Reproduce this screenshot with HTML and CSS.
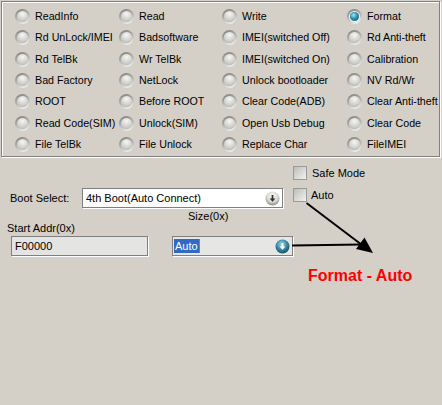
FILE: index.html
```html
<!DOCTYPE html>
<html lang="en">
  <head>
    <meta charset="utf-8" />
    <title>Flash Tool</title>
    <link rel="stylesheet" href="styles.css">
  </head>
  <body>
    <!-- operation choices -->
    <div class="group">
      <div class="radios">
        <label class="opt"><span class="radio"></span>ReadInfo</label>
        <label class="opt"><span class="radio"></span>Read</label>
        <label class="opt"><span class="radio"></span>Write</label>
        <label class="opt"><span class="radio on"></span>Format</label>

        <label class="opt"><span class="radio"></span>Rd UnLock/IMEI</label>
        <label class="opt"><span class="radio"></span>Badsoftware</label>
        <label class="opt"><span class="radio"></span>IMEI(switched Off)</label>
        <label class="opt"><span class="radio"></span>Rd Anti-theft</label>

        <label class="opt"><span class="radio"></span>Rd TelBk</label>
        <label class="opt"><span class="radio"></span>Wr TelBk</label>
        <label class="opt"><span class="radio"></span>IMEI(switched On)</label>
        <label class="opt"><span class="radio"></span>Calibration</label>

        <label class="opt"><span class="radio"></span>Bad Factory</label>
        <label class="opt"><span class="radio"></span>NetLock</label>
        <label class="opt"><span class="radio"></span>Unlock bootloader</label>
        <label class="opt"><span class="radio"></span>NV Rd/Wr</label>

        <label class="opt"><span class="radio"></span>ROOT</label>
        <label class="opt"><span class="radio"></span>Before ROOT</label>
        <label class="opt"><span class="radio"></span>Clear Code(ADB)</label>
        <label class="opt"><span class="radio"></span>Clear Anti-theft</label>

        <label class="opt"><span class="radio"></span>Read Code(SIM)</label>
        <label class="opt"><span class="radio"></span>Unlock(SIM)</label>
        <label class="opt"><span class="radio"></span>Open Usb Debug</label>
        <label class="opt"><span class="radio"></span>Clear Code</label>

        <label class="opt"><span class="radio"></span>File TelBk</label>
        <label class="opt"><span class="radio"></span>File Unlock</label>
        <label class="opt"><span class="radio"></span>Replace Char</label>
        <label class="opt"><span class="radio"></span>FileIMEI</label>
      </div>
    </div>

    <!-- boot options -->
    <div class="row-safe">
      <span class="check"></span><span>Safe Mode</span>
    </div>

    <div class="row-boot">
      <span class="boot-label">Boot Select:</span>
      <div class="combo">
        <span>4th Boot(Auto Connect)</span>
        <svg class="drop" viewBox="0 0 15 15">
          <defs>
            <radialGradient id="grey-ball" cx="50%" cy="35%" r="65%">
              <stop offset="0" stop-color="#ffffff" />
              <stop offset="0.6" stop-color="#d8d8d4" />
              <stop offset="1" stop-color="#888884" />
            </radialGradient>
          </defs>
          <circle cx="7.5" cy="7.5" r="7" fill="url(#grey-ball)" />
          <path d="M6.6 4h1.8v3.4h2L7.5 10.8 4.6 7.4h2z" fill="#333" />
        </svg>
      </div>
      <div class="auto-check">
        <span class="check"></span><span>Auto</span>
      </div>
    </div>

    <div class="row-fields">
      <div class="field-left">
        <div class="field-label">Start Addr(0x)</div>
        <div class="textbox">F00000</div>
      </div>
      <div class="field-right">
        <div class="field-label size-label">Size(0x)</div>
        <div class="combo size-combo">
          <span class="sel">Auto</span><span class="caret"></span>
          <svg class="drop" viewBox="0 0 15 15">
            <defs>
              <radialGradient id="teal-ball" cx="45%" cy="35%" r="65%">
                <stop offset="0" stop-color="#a8dcea" />
                <stop offset="0.55" stop-color="#3a8da8" />
                <stop offset="1" stop-color="#164f62" />
              </radialGradient>
            </defs>
            <circle cx="7.5" cy="7.5" r="7" fill="url(#teal-ball)" />
            <path d="M6.6 4h1.8v3.4h2L7.5 10.8 4.6 7.4h2z" fill="#fff" />
          </svg>
        </div>
      </div>
    </div>

    <div class="note">Format - Auto</div>

    <!-- annotation arrows -->
    <svg class="arrows" width="442" height="405" viewBox="0 0 442 405">
      <line x1="306.5" y1="203" x2="362" y2="245" stroke="#000" stroke-width="2" />
      <line x1="292" y1="245.5" x2="361" y2="244.5" stroke="#000" stroke-width="2" />
      <polygon points="373,253 356,249 364.5,237.5" fill="#000" />
    </svg>
  </body>
</html>
```

FILE: styles.css
```css
body {
  margin: 0;
  width: 442px;
  height: 405px;
  position: relative;
  overflow: hidden;
  background: #d4d0c8;
  color: #000;
  font: 11px/13px "Liberation Sans", Arial, sans-serif;
}

.group {
  margin: 1px 2px 0 1px;
  padding: 4px 0 1px 13px;
  border: 1px solid #808080;
  box-shadow: inset 1px 1px 0 #fff, 1px 1px 0 #fff;
}
.radios {
  display: grid;
  grid-template-columns: 104px 103px 125px 1fr;
  grid-auto-rows: 21.3px;
  font-size: 10.7px;
}
.opt {
  display: flex;
  align-items: center;
  white-space: nowrap;
}
.radio {
  position: relative;
  flex: none;
  width: 15px;
  height: 15px;
  margin-right: 5px;
  border-radius: 50%;
  background: linear-gradient(160deg, #7c7c78 0%, #b4b4b0 50%, #ffffff 100%);
}
.radio::after {
  content: "";
  position: absolute;
  inset: 2px;
  border-radius: 50%;
  background: radial-gradient(circle at 50% 28%, #f6f6f4 0%, #cfcfcb 60%, #a8a8a4 100%);
}
.radio.on::after {
  inset: 3px;
  background: radial-gradient(circle at 40% 35%, #a8e2f2 0%, #2a8fb0 45%, #0d4f66 100%);
  box-shadow: 0 0 0 1px #f4f4f2;
}

.check {
  flex: none;
  width: 12px;
  height: 12px;
  border: 1px solid #9a9a96;
  background: linear-gradient(135deg, #bcbcb8, #f2f2f0);
}

.row-safe {
  display: flex;
  align-items: center;
  gap: 5px;
  height: 14px;
  margin: 9px 0 0 293px;
}

.row-boot {
  display: flex;
  align-items: flex-start;
  height: 20px;
  margin-top: 8px;
}
.boot-label {
  width: 82px;
  padding-left: 10px;
  box-sizing: border-box;
  line-height: 20px;
}
.combo {
  display: flex;
  align-items: center;
  width: 201px;
  height: 20px;
  box-sizing: border-box;
  padding: 0 2px 0 3px;
  border: 1px solid #808080;
  box-shadow: 1px 1px 0 #fff;
  background: #fff;
}
.drop {
  width: 15px;
  height: 15px;
  margin-left: auto;
}
.auto-check {
  display: flex;
  align-items: center;
  gap: 4px;
  height: 14px;
  margin-left: 10px;
}

.row-fields {
  display: flex;
  align-items: flex-end;
  height: 48px;
}
.field-left {
  margin-left: 7px;
}
.field-left .field-label {
  margin-bottom: 1px;
}
.textbox {
  width: 137px;
  height: 20px;
  box-sizing: border-box;
  margin-left: 4px;
  padding-left: 3px;
  border: 1px solid #808080;
  box-shadow: 1px 1px 0 #fff;
  background: #e4e4e2;
  line-height: 18px;
}
.field-right {
  margin-left: 24px;
}
.size-label {
  padding-left: 16px;
  margin-bottom: 13px;
}
.size-combo {
  width: 121px;
  padding-left: 1px;
  background: #e6e6e4;
}
.sel {
  padding: 0 1px;
  background: #316ac5;
  color: #fff;
  line-height: 14px;
}
.caret {
  width: 1px;
  height: 14px;
  background: #c07030;
}

.note {
  margin: 11px 0 0 308px;
  color: #f00;
  font: bold 16px/18px "Liberation Sans", Arial, sans-serif;
}

.arrows {
  position: absolute;
  top: 0;
  left: 0;
  pointer-events: none;
}
```
